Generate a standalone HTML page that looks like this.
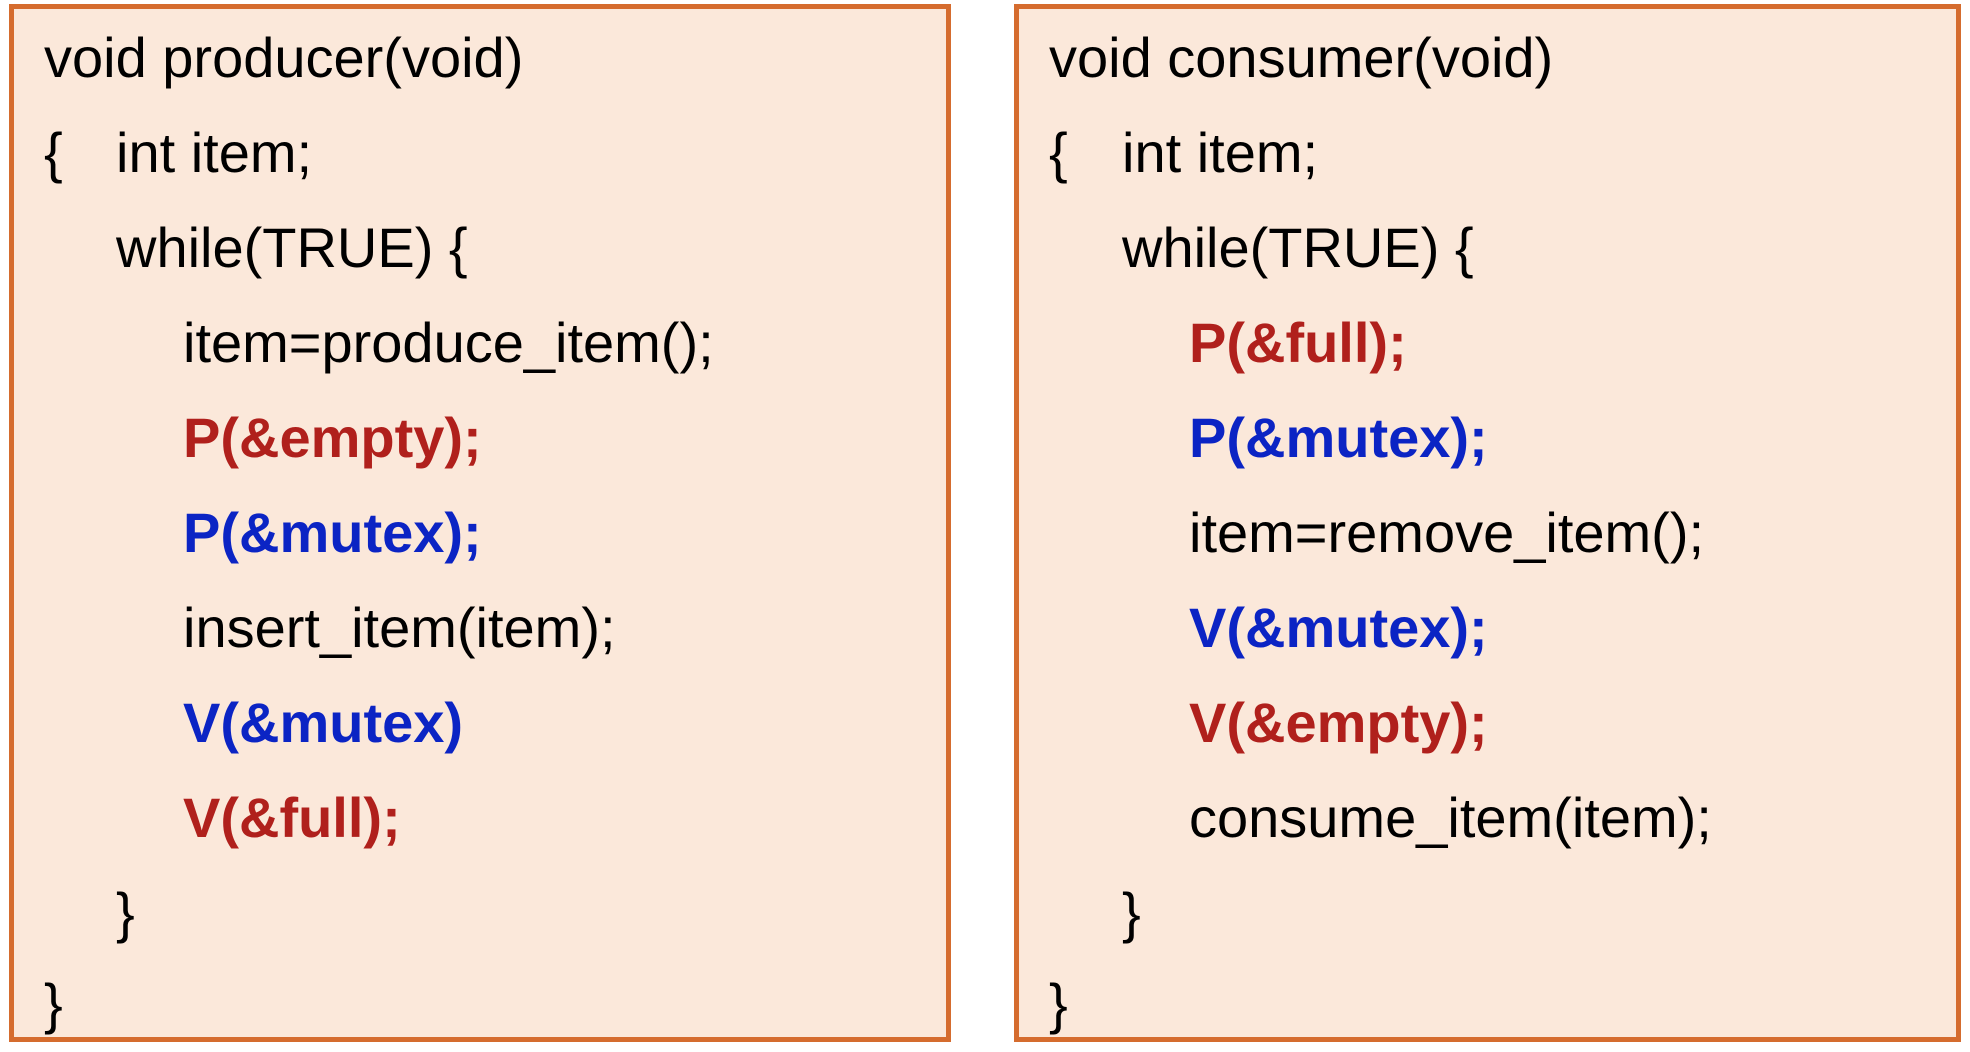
<!DOCTYPE html>
<html><head><style>
html,body{margin:0;padding:0;width:1970px;height:1046px;background:#fff;overflow:hidden}
.box{position:absolute;top:4px;height:1038px;background:#fbe8da;border:5px solid #d56c2e;box-sizing:border-box}
.l{position:absolute;font-family:"Liberation Sans",sans-serif;font-size:56px;line-height:96px;height:96px;color:#000;white-space:pre}
.r{color:#b0201c;font-weight:bold}
.b{color:#0b24c4;font-weight:bold}
</style></head><body>
<div class="box" style="left:9px;width:942px"></div>
<div class="box" style="left:1014px;width:947px"></div>

<div class="l" style="left:44px;top:10px">void producer(void)</div>
<div class="l" style="left:44px;top:105px">{</div>
<div class="l" style="left:116px;top:105px">int item;</div>
<div class="l" style="left:116px;top:200px">while(TRUE) {</div>
<div class="l" style="left:183px;top:295px">item=produce_item();</div>
<div class="l r" style="left:183px;top:390px">P(&amp;empty);</div>
<div class="l b" style="left:183px;top:485px">P(&amp;mutex);</div>
<div class="l" style="left:183px;top:580px">insert_item(item);</div>
<div class="l b" style="left:183px;top:675px">V(&amp;mutex)</div>
<div class="l r" style="left:183px;top:770px">V(&amp;full);</div>
<div class="l" style="left:116px;top:865px">}</div>
<div class="l" style="left:44px;top:956px">}</div>

<div class="l" style="left:1049px;top:10px">void consumer(void)</div>
<div class="l" style="left:1049px;top:105px">{</div>
<div class="l" style="left:1122px;top:105px">int item;</div>
<div class="l" style="left:1122px;top:200px">while(TRUE) {</div>
<div class="l r" style="left:1189px;top:295px">P(&amp;full);</div>
<div class="l b" style="left:1189px;top:390px">P(&amp;mutex);</div>
<div class="l" style="left:1189px;top:485px">item=remove_item();</div>
<div class="l b" style="left:1189px;top:580px">V(&amp;mutex);</div>
<div class="l r" style="left:1189px;top:675px">V(&amp;empty);</div>
<div class="l" style="left:1189px;top:770px">consume_item(item);</div>
<div class="l" style="left:1122px;top:865px">}</div>
<div class="l" style="left:1049px;top:956px">}</div>
</body></html>
